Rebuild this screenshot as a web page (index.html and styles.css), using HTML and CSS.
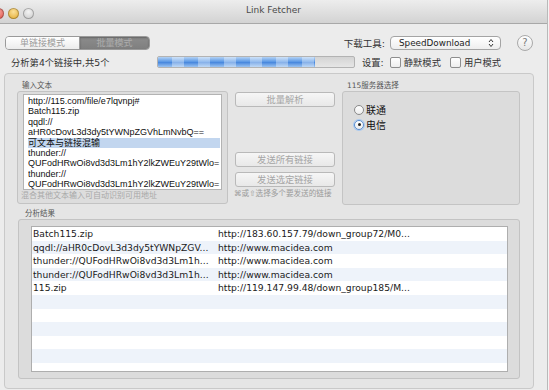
FILE: index.html
```html
<!DOCTYPE html>
<html lang="zh-CN">
<head>
    <meta charset="UTF-8">
    <meta name="viewport" content="width=device-width, initial-scale=1.0">
    <title>Link Fetcher</title>
    <link rel="stylesheet" href="styles.css">
</head>
<body>

<div class="window">
    <div class="titlebar">
        <div class="lights">
            <span class="light red"></span>
            <span class="light yellow"></span>
            <span class="light green"></span>
        </div>
        <div class="title">Link Fetcher</div>
    </div>

    <div class="toolbar">
        <div class="segmented">
            <span class="seg seg-on">单链接模式</span>
            <span class="seg seg-off">批量模式</span>
        </div>
        <span class="tool-label">下载工具:</span>
        <div class="popup">
            <span>SpeedDownload</span>
            <svg width="6" height="10" viewBox="0 0 6 10">
                <path d="M1 4 L3 1.5 L5 4" fill="none" stroke="#333" stroke-width="1"/>
                <path d="M1 6 L3 8.5 L5 6" fill="none" stroke="#333" stroke-width="1"/>
            </svg>
        </div>
        <div class="help">?</div>
    </div>

    <div class="statusbar">
        <span class="status-text">分析第4个链接中,共5个</span>
        <div class="progress"><div class="progress-fill" style="width: 80%"></div></div>
        <span class="set-label">设置:</span>
        <label class="check"><span class="box"></span>静默模式</label>
        <label class="check"><span class="box"></span>用户模式</label>
    </div>

    <div class="main">
        <div class="top">
            <div class="col-input">
                <div class="grp-label">输入文本</div>
                <div class="input-box">
                    <div class="textarea">
                        <div class="line">http://115.com/file/e7lqvnpj#</div>
                        <div class="line">Batch115.zip</div>
                        <div class="line">qqdl://</div>
                        <div class="line">aHR0cDovL3d3dy5tYWNpZGVhLmNvbQ==</div>
                        <div class="line selected">可文本与链接混输</div>
                        <div class="line">thunder://</div>
                        <div class="line">QUFodHRwOi8vd3d3Lm1hY2lkZWEuY29tWlo=</div>
                        <div class="line">thunder://</div>
                        <div class="line">QUFodHRwOi8vd3d3Lm1hY2lkZWEuY29tWlo=</div>
                    </div>
                    <div class="hint">混合其他文本输入可自动识别可用地址</div>
                </div>
            </div>

            <div class="col-buttons">
                <button class="btn">批量解析</button>
                <button class="btn btn-send">发送所有链接</button>
                <button class="btn btn-sel">发送选定链接</button>
                <div class="hint btn-hint">⌘或⇧选择多个要发送的链接</div>
            </div>

            <div class="col-server">
                <div class="grp-label">115服务器选择</div>
                <div class="server-box">
                    <label class="radio"><span class="dot"></span>联通</label>
                    <label class="radio"><span class="dot on"></span>电信</label>
                </div>
            </div>
        </div>

        <div class="grp-label result-label">分析结果</div>
        <div class="result-box">
            <div class="table">
                <div class="row"><span class="c1">Batch115.zip</span><span class="c2">http://183.60.157.79/down_group72/M0...</span></div>
                <div class="row"><span class="c1">qqdl://aHR0cDovL3d3dy5tYWNpZGV...</span><span class="c2">http://www.macidea.com</span></div>
                <div class="row"><span class="c1">thunder://QUFodHRwOi8vd3d3Lm1h...</span><span class="c2">http://www.macidea.com</span></div>
                <div class="row"><span class="c1">thunder://QUFodHRwOi8vd3d3Lm1h...</span><span class="c2">http://www.macidea.com</span></div>
                <div class="row"><span class="c1">115.zip</span><span class="c2">http://119.147.99.48/down_group185/M...</span></div>
                <div class="row"></div>
                <div class="row"></div>
                <div class="row"></div>
                <div class="row"></div>
                <div class="row"></div>
            </div>
        </div>
    </div>
</div>

</body>
</html>
```

FILE: styles.css
```css
body {
    margin: 0;
    width: 549px;
    height: 390px;
    overflow: hidden;
    background-color: #f4f4f4;
    font-family: "DejaVu Sans", "Noto Sans CJK SC", sans-serif;
    color: #222;
}
.window {
    width: 547px;
    height: 390px;
    background-color: #ececec;
    border-right: 1px solid #b9b9b9;
}
.titlebar {
    height: 23px;
    display: flex;
    align-items: center;
    position: relative;
    background: linear-gradient(#ededed, #d3d3d3);
    border-bottom: 1px solid #a8a8a8;
}
.lights {
    display: flex;
    gap: 4px;
    margin-left: -7px;
    margin-top: 4px;
}
.light {
    width: 11px;
    height: 11px;
    border-radius: 50%;
    box-shadow: inset 0 0 0 1px rgba(0, 0, 0, 0.25);
}
.red { background: radial-gradient(circle at 50% 35%, #f7a39b, #dd4b3f); }
.yellow { background: radial-gradient(circle at 50% 35%, #fbe09a, #e0a524); }
.green { background: radial-gradient(circle at 50% 35%, #f4f4f4, #c4c4c4); }
.title {
    position: absolute;
    left: 0;
    right: 0;
    top: 5px;
    text-align: center;
    font-size: 9px;
    color: #4a4a4a;
}
.toolbar {
    display: flex;
    align-items: center;
    margin-top: 12px;
    height: 14px;
    padding-left: 5px;
}
.segmented {
    display: flex;
    width: 145px;
    height: 14px;
    border: 1px solid #9a9a9a;
    border-radius: 4px;
    overflow: hidden;
    box-sizing: border-box;
}
.seg {
    font-size: 9px;
    line-height: 12px;
    text-align: center;
}
.seg-on {
    width: 73px;
    color: #9a9a9a;
    background: linear-gradient(#ffffff, #ececec);
    border-right: 1px solid #9a9a9a;
}
.seg-off {
    flex: 1;
    color: #adadad;
    background: linear-gradient(#8c8c8c, #7f7f7f);
    box-shadow: inset 0 1px 2px rgba(0, 0, 0, 0.3);
}
.tool-label {
    margin-left: auto;
    font-size: 9.5px;
    color: #333;
}
.popup {
    margin-left: 5px;
    width: 111px;
    height: 14px;
    box-sizing: border-box;
    border: 1px solid #a4a4a4;
    border-radius: 4px;
    background: linear-gradient(#ffffff, #eeeeee);
    display: flex;
    align-items: center;
    justify-content: space-between;
    padding: 0 6px 0 8px;
    font-size: 8.8px;
    color: #222;
}
.help {
    margin-left: 16px;
    margin-right: 14px;
    width: 16px;
    height: 16px;
    box-sizing: border-box;
    border: 1px solid #a9a9a9;
    border-radius: 50%;
    background: linear-gradient(#ffffff, #e6e6e6);
    font-size: 10px;
    line-height: 14px;
    text-align: center;
    color: #7a7a7a;
}
.statusbar {
    display: flex;
    align-items: center;
    margin-top: 6px;
    height: 12px;
    padding-left: 11px;
    font-size: 9.3px;
    color: #333;
}
.status-text {
    width: 146px;
}
.progress {
    width: 198px;
    height: 12px;
    box-sizing: border-box;
    border: 1px solid #b3b3b3;
    border-radius: 2px;
    background: linear-gradient(#d4d4d4, #e6e6e6);
    overflow: hidden;
}
.progress-fill {
    height: 100%;
    background:
        repeating-linear-gradient(90deg, rgba(255, 255, 255, 0) 0 14px, rgba(255, 255, 255, 0.35) 14px 26px),
        linear-gradient(#b3d2f5, #5f9be6 45%, #4a89de 55%, #9cc4f2);
}
.set-label {
    margin-left: 7px;
}
.check {
    display: flex;
    align-items: center;
    margin-left: 6px;
}
.check + .check {
    margin-left: 9px;
}
.box {
    width: 11px;
    height: 11px;
    box-sizing: border-box;
    border: 1px solid #8e8e8e;
    border-radius: 2px;
    background: linear-gradient(#ffffff, #eeeeee);
    margin-right: 3px;
}
.main {
    margin: 5px 0 0 4px;
    width: 530px;
    height: 316px;
    box-sizing: border-box;
    border: 1px solid #c9c9c9;
    border-radius: 4px;
    background-color: #e5e5e5;
    padding: 6px 12px 0 12px;
}
.top {
    display: flex;
    height: 125px;
}
.grp-label {
    font-size: 7.5px;
    line-height: 11px;
    color: #555;
    padding-left: 5px;
}
.col-input {
    width: 211px;
}
.input-box {
    height: 113px;
    box-sizing: border-box;
    border: 1px solid #c3c3c3;
    border-radius: 3px;
    background-color: #dddddd;
    padding-top: 2px;
}
.textarea {
    margin: 0 5px;
    height: 96px;
    box-sizing: border-box;
    border: 1px solid #b3b3b3;
    background-color: #fff;
    padding: 1px 0 0 4px;
    font-family: "Liberation Sans", "Noto Sans CJK SC", sans-serif;
    font-size: 9px;
    color: #111;
}
.line {
    height: 10.4px;
    line-height: 10.4px;
    white-space: nowrap;
    overflow: hidden;
}
.selected {
    background-color: #c2d6ef;
    margin-right: 1px;
}
.hint {
    font-size: 8px;
    line-height: 11px;
    color: #a8a8a8;
    padding-left: 3px;
    white-space: nowrap;
}
.col-buttons {
    width: 100px;
    margin-left: 7px;
    padding-top: 12px;
    display: flex;
    flex-direction: column;
}
.btn {
    height: 15px;
    padding: 0;
    border: 1px solid #b9b9b9;
    border-radius: 3px;
    background: linear-gradient(#f6f6f6, #e8e8e8);
    font-family: "DejaVu Sans", "Noto Sans CJK SC", sans-serif;
    font-size: 9.3px;
    line-height: 13px;
    color: #a5a5a5;
}
.btn-send {
    margin-top: 45px;
}
.btn-sel {
    margin-top: 5px;
}
.btn-hint {
    padding-left: 0;
    margin-left: -1px;
    margin-top: 1px;
    font-size: 7.6px;
    color: #9a9a9a;
}
.col-server {
    width: 178px;
    margin-left: 7px;
}
.server-box {
    height: 114px;
    box-sizing: border-box;
    border: 1px solid #c4c4c4;
    border-radius: 3px;
    background-color: #dcdcdc;
    padding: 10px 0 0 11px;
}
.radio {
    display: flex;
    align-items: center;
    height: 15px;
    font-size: 10px;
    color: #111;
}
.dot {
    width: 10px;
    height: 10px;
    box-sizing: border-box;
    border: 1px solid #8a8a8a;
    border-radius: 50%;
    background: linear-gradient(#ffffff, #ececec);
    margin-right: 2px;
    display: flex;
    align-items: center;
    justify-content: center;
}
.dot.on {
    border-color: #5b8fd3;
    box-shadow: 0 0 0 1px #a9c9ef;
}
.dot.on::after {
    content: "";
    width: 3px;
    height: 3px;
    border-radius: 50%;
    background-color: #222;
}
.result-label {
    margin-top: 4px;
    line-height: 10px;
    padding-left: 8px;
}
.result-box {
    margin-left: 1px;
    width: 502px;
    height: 160px;
    box-sizing: border-box;
    border: 1px solid #c3c3c3;
    border-radius: 3px;
    background-color: #dcdcdc;
    padding: 6px 11px 0 12px;
}
.table {
    height: 146px;
    box-sizing: border-box;
    border: 1px solid #aeaeae;
    background-color: #fff;
    overflow: hidden;
}
.row {
    display: flex;
    height: 13.6px;
    line-height: 13.6px;
    font-size: 9.2px;
    color: #1a1a1a;
    white-space: nowrap;
}
.row:nth-child(even) {
    background-color: #eef3fa;
}
.c1 {
    width: 184px;
    padding-left: 1px;
}
.c2 {
    padding-left: 1px;
}
```
